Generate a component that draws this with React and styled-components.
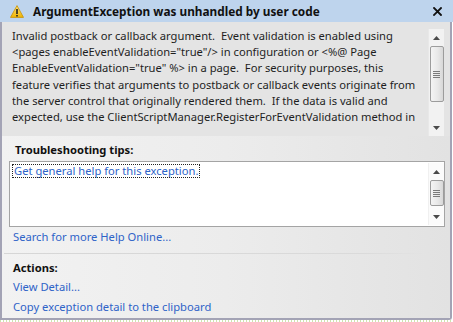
import React from 'react';
import styled, { createGlobalStyle } from 'styled-components';

const GlobalStyle = createGlobalStyle`
  html, body {
    margin: 0;
    padding: 0;
    background: #ffffff;
  }
  body {
    font-family: "Noto Sans", "Open Sans", sans-serif;
    font-size: 11.2px;
    color: #1e1e1e;
  }
`;

const Balloon = styled.div`
  width: 453px;
  height: 322px;
  display: flex;
  flex-direction: column;
  overflow: hidden;
`;

const TitleBar = styled.div`
  height: 22px;
  flex: none;
  background: #bed4ed;
  display: flex;
  align-items: center;
  padding: 0 10px 0 10px;
  box-sizing: border-box;
`;

const Title = styled.div`
  flex: 1;
  margin-left: 9px;
  font-weight: 700;
  font-size: 11.8px;
  color: #111;
  white-space: nowrap;
`;

const CloseButton = styled.div`
  width: 10px;
  display: flex;
  justify-content: center;
  margin-right: 1px;
`;

const Body = styled.div`
  width: 452px;
  height: 298px;
  flex: none;
  box-sizing: border-box;
  border-left: 2px solid #a3a3b5;
  border-right: 2px solid #a3a3b5;
  border-bottom: 2px solid #a3a3b5;
  border-bottom-right-radius: 3px;
  display: flex;
  flex-direction: column;
  overflow: hidden;
`;

const MessagePanel = styled.div`
  height: 114px;
  flex: none;
  background: #e4e4e4;
  display: flex;
  padding: 7px 6px 0 10px;
  box-sizing: border-box;
`;

const Message = styled.div`
  flex: 1;
  white-space: pre;
  line-height: 16.2px;
  overflow: hidden;
  margin-top: -1px;
`;

const Lower = styled.div`
  flex: 1;
  background: linear-gradient(90deg, #f2f2f2 0%, #ececec 50%, #e2e2e2 100%);
  display: flex;
  flex-direction: column;
  padding: 6px 5px 0 0;
`;

const Section = styled.div`
  display: flex;
  flex-direction: column;
  padding-left: 11px;
`;

const Heading = styled.div`
  font-weight: 700;
  font-size: 11.2px;
  color: #111;
  line-height: 16px;
  margin-left: ${p => p.$offset || 0}px;
  margin-bottom: ${p => p.$gap || 0}px;
`;

const TipsBox = styled.div`
  margin: 3px 0 0 7px;
  height: 66px;
  box-sizing: border-box;
  border: 1px solid #a4a4a4;
  background: #ffffff;
  display: flex;
  padding: 1px 0 1px 2px;
`;

const TipsList = styled.div`
  flex: 1;
`;

const FocusLink = styled.a`
  display: inline-block;
  outline: 1px dotted #222;
  outline-offset: -1px;
  padding: 0 2px 0 2px;
  line-height: 14px;
  color: #2e63c8;
  text-decoration: none;
`;

const Link = styled.a`
  display: block;
  color: #2e63c8;
  text-decoration: none;
  line-height: 19.3px;
  white-space: nowrap;
`;

const Separator = styled.div`
  height: 1px;
  margin: 7px 20px 6px 2px;
  background: linear-gradient(90deg, #d6d6d6 0%, #dadada 85%, rgba(218,218,218,0) 100%);
`;

const Track = styled.div`
  width: 16px;
  flex: none;
  margin-left: auto;
  background: ${p => p.$light ? '#fbfbfb' : '#f2f2f2'};
  display: flex;
  flex-direction: column;
  align-items: center;
  box-sizing: border-box;
  border-left: 1px solid ${p => p.$light ? '#f0f0f0' : '#e8e8e8'};
`;

const Arrow = styled.div`
  height: ${p => p.$size}px;
  flex: none;
  display: flex;
  align-items: center;
  justify-content: center;
`;

const Thumb = styled.div`
  width: 14px;
  height: ${p => p.$size}px;
  flex: none;
  box-sizing: border-box;
  border: 1px solid #9c9c9c;
  border-radius: 2px;
  background: linear-gradient(90deg, #f4f4f4 0%, #e8e8e8 55%, #d8d8d8 100%);
  display: flex;
  align-items: center;
  justify-content: center;
`;

const Spacer = styled.div`
  flex: 1;
`;

const Ground = styled.div`
  height: 2px;
  flex: none;
  background: repeating-linear-gradient(90deg, #b9d98c 0 1px, #ffffff 1px 3px);
  opacity: 0.7;
`;

const WarningIcon = () => (
  <svg width="14" height="13" viewBox="0 0 14 13">
    <defs>
      <linearGradient id="warnFill" x1="0" y1="0" x2="0" y2="1">
        <stop offset="0" stopColor="#ffe27a" />
        <stop offset="1" stopColor="#f0b400" />
      </linearGradient>
    </defs>
    <path d="M7 0.6 L13.5 12.4 L0.5 12.4 Z" fill="url(#warnFill)" stroke="#c89000" strokeWidth="0.8" strokeLinejoin="round" />
    <rect x="6.2" y="4" width="1.6" height="5" fill="#222" />
    <rect x="6.2" y="10" width="1.6" height="1.5" fill="#222" />
  </svg>
);

const CloseIcon = () => (
  <svg width="9" height="9" viewBox="0 0 9 9">
    <path d="M1 1 L8 8 M8 1 L1 8" stroke="#111" strokeWidth="1.8" strokeLinecap="square" />
  </svg>
);

const UpArrow = () => (
  <svg width="7" height="4" viewBox="0 0 7 4">
    <path d="M3.5 0 L7 4 L0 4 Z" fill="#4a4a4a" />
  </svg>
);

const DownArrow = () => (
  <svg width="7" height="4" viewBox="0 0 7 4">
    <path d="M0 0 L7 0 L3.5 4 Z" fill="#4a4a4a" />
  </svg>
);

const Grip = () => (
  <svg width="7" height="7" viewBox="0 0 7 7">
    <path d="M0 0.5 H7 M0 2.5 H7 M0 4.5 H7 M0 6.5 H7" stroke="#7a7a7a" strokeWidth="1" />
  </svg>
);

const Scrollbar = ({ top, thumb, light }) => (
  <Track $light={light}>
    <Arrow $size={17}><UpArrow /></Arrow>
    <Spacer style={{ flex: `0 0 ${top}px` }} />
    <Thumb $size={thumb}><Grip /></Thumb>
    <Spacer />
    <Arrow $size={17}><DownArrow /></Arrow>
  </Track>
);

const message = [
  'Invalid postback or callback argument.  Event validation is enabled using',
  '<pages enableEventValidation="true"/> in configuration or <%@ Page',
  'EnableEventValidation="true" %> in a page.  For security purposes, this',
  'feature verifies that arguments to postback or callback events originate from',
  'the server control that originally rendered them.  If the data is valid and',
  'expected, use the ClientScriptManager.RegisterForEventValidation method in',
].join('\n');

export default function App() {
  return (
    <>
      <GlobalStyle />
      <Balloon>
        <TitleBar>
          <WarningIcon />
          <Title>ArgumentException was unhandled by user code</Title>
          <CloseButton><CloseIcon /></CloseButton>
        </TitleBar>
        <Body>
          <MessagePanel>
            <Message>{message}</Message>
            <Scrollbar top={0} thumb={56} />
          </MessagePanel>
          <Lower>
            <Section>
              <Heading $offset={2}>Troubleshooting tips:</Heading>
            </Section>
            <TipsBox>
              <TipsList>
                <FocusLink>Get general help for this exception.</FocusLink>
              </TipsList>
              <Scrollbar top={0} thumb={26} light />
            </TipsBox>
            <Section>
              <Link>Search for more Help Online...</Link>
            </Section>
            <Separator />
            <Section>
              <Heading $gap={1}>Actions:</Heading>
              <Link>View Detail...</Link>
              <Link>Copy exception detail to the clipboard</Link>
            </Section>
          </Lower>
        </Body>
        <Ground />
      </Balloon>
    </>
  );
}
